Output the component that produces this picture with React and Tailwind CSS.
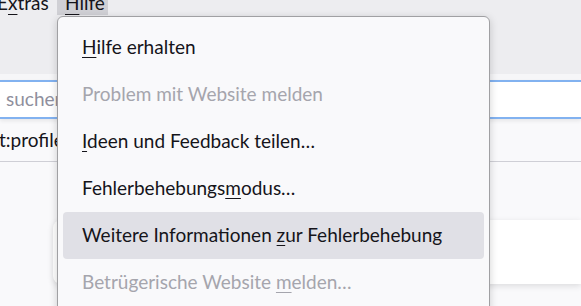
const items = [
  { pre: '', key: 'H', post: 'ilfe erhalten' },
  { pre: 'Problem mit Website melden', key: '', post: '', disabled: true },
  { pre: '', key: 'I', post: 'deen und Feedback teilen…' },
  { pre: 'Fehlerbehebungs', key: 'm', post: 'odus…' },
  { pre: 'Weitere Informationen ', key: 'z', post: 'ur Fehlerbehebung', active: true },
  { pre: 'Betrügerische Website ', key: 'm', post: 'elden…', disabled: true },
];

const Key = ({ children, offset = 'underline-offset-[3px]' }) => (
  <span className={'underline decoration-1 ' + offset}>{children}</span>
);

export default function App() {
  return (
    <div className="relative w-[581px] h-[306px] overflow-hidden bg-[#f9f9fb] text-[#15141a] font-['Segoe_UI','Lato','Noto_Sans',sans-serif] text-[19px]">
      {/* toolbar with menubar */}
      <div className="h-[74px] bg-[#ededf0]">
        <div className="flex h-[15px] items-start overflow-hidden">
          <div className="w-[57px] -mt-[7px] leading-[20px] whitespace-nowrap">
            <span className="-ml-[3px] inline-block">
              E<Key offset="underline-offset-[4px]">x</Key>tras
            </span>
          </div>
          <div className="h-[15px] w-[51px] bg-[#d0d0d5] overflow-hidden">
            <div className="pl-[8px] -mt-[7px] leading-[20px]">
              <Key offset="underline-offset-[4px]">H</Key>ilfe
            </div>
          </div>
        </div>
      </div>
      <div className="h-[6px] bg-[#f6f6f8]" />

      {/* url field */}
      <div className="h-[39px] border-y-2 border-[#82b2f0] bg-white shadow-[0_2px_4px_rgba(0,0,0,0.08)] flex items-center pl-[6px]">
        <span className="text-[#8f8f9d] whitespace-nowrap">suchen oder Adresse eingeben</span>
      </div>

      {/* address row */}
      <div className="h-[43px] border-b border-[#cfcfd6] flex items-center">
        <span className="-ml-[1px] whitespace-nowrap">t:profiles</span>
      </div>

      {/* page content */}
      <div className="pl-[53px] pt-[58px]">
        <div className="h-[64px] bg-white rounded-l-[8px] shadow-[0_2px_6px_rgba(0,0,0,0.12)]" />
      </div>

      {/* help menu popup */}
      <div className="absolute left-[57px] top-[16px] w-[433px] h-[320px] bg-[#f9f9fb] border border-[#a0a0a3] rounded-t-[6px] px-[5px] pt-[7px] shadow-[0_2px_8px_rgba(0,0,0,0.18)]">
        {items.map((it, i) => (
          <div
            key={i}
            className={
              'h-[47px] flex items-center pl-[19px] rounded-[4px] whitespace-nowrap ' +
              (it.active ? 'bg-[#e0e0e6] ' : '') +
              (it.disabled ? 'text-[#a5a5ad]' : 'text-[#15141a]')
            }
          >
            <span>
              {it.pre}
              {it.key && <Key>{it.key}</Key>}
              {it.post}
            </span>
          </div>
        ))}
      </div>
    </div>
  );
}
